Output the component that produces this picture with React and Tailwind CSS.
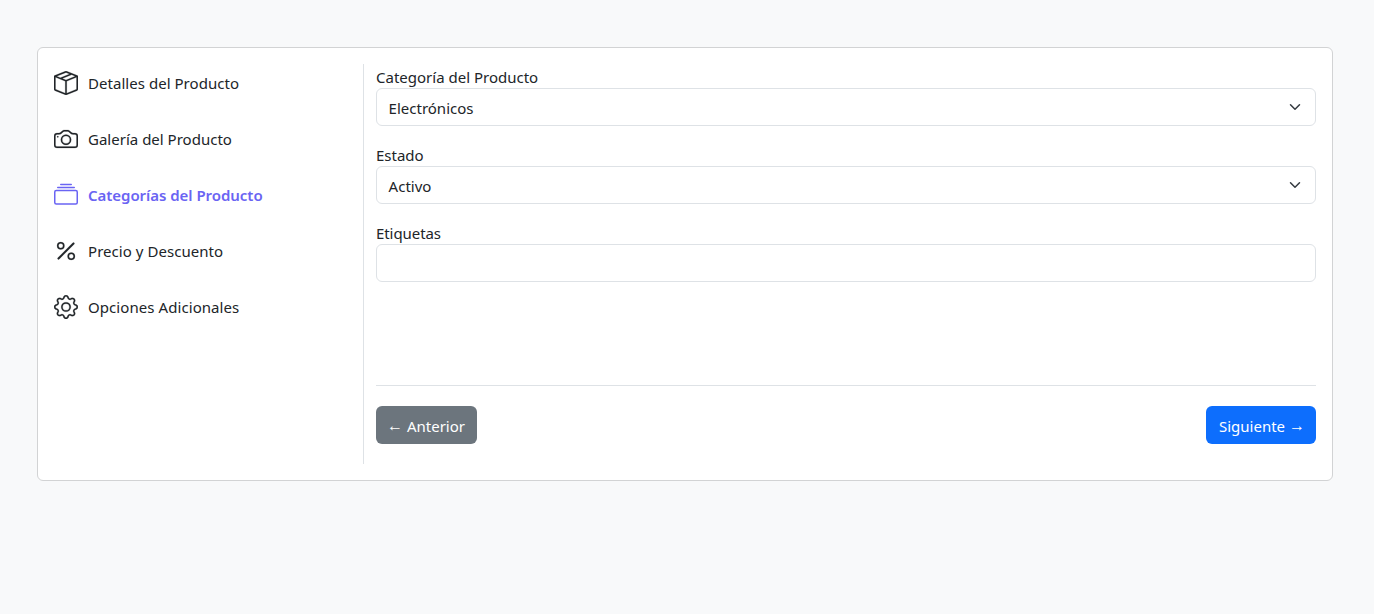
import { BsBoxSeam, BsCamera, BsCollection, BsPercent, BsGear } from "react-icons/bs";

const STEPS = [
  { label: "Detalles del Producto", Icon: BsBoxSeam, spacing: "tracking-[0.04px]" },
  { label: "Galería del Producto", Icon: BsCamera, spacing: "tracking-[0.01px]" },
  { label: "Categorías del Producto", Icon: BsCollection, active: true, spacing: "tracking-[-0.04px]" },
  { label: "Precio y Descuento", Icon: BsPercent, spacing: "tracking-[0.05px]" },
  { label: "Opciones Adicionales", Icon: BsGear, spacing: "tracking-[0.07px]" },
];

function Sidebar() {
  return (
    <nav className="flex w-[309px] shrink-0 flex-col gap-8 pt-[7px]">
      {STEPS.map(({ label, Icon, active, spacing }) => (
        <a
          key={label}
          className={
            active
              ? "flex h-6 items-center gap-2.5 font-semibold text-[#6a64f3]"
              : "flex h-6 items-center gap-2.5"
          }
        >
          <Icon className={active ? "size-6 shrink-0 stroke-0" : "size-6 shrink-0 stroke-[0.12]"} />
          <span className={spacing}>{label}</span>
        </a>
      ))}
    </nav>
  );
}

function Chevron() {
  return (
    <svg viewBox="0 0 16 16" className="mr-0.5 h-3 w-3 fill-none stroke-[#343a40] stroke-2">
      <path strokeLinecap="round" strokeLinejoin="round" d="m2 5 6 6 6-6" />
    </svg>
  );
}

function Select({ label, value }) {
  return (
    <div className="mb-4">
      <div className="h-6 pt-px">{label}</div>
      <div className="flex h-[38px] items-center justify-between rounded-md border border-[#dee2e6] bg-white px-3">
        <span className="-ml-[0.4px] pt-0.5">{value}</span>
        <Chevron />
      </div>
    </div>
  );
}

export default function App() {
  return (
    <div className="min-h-screen bg-[#f8f9fa] pt-[47px] pl-[37px] font-['Noto_Sans','Open_Sans',sans-serif] text-[15px] leading-6 text-[#212529]">
      <main className="flex h-[434px] w-[1296px] rounded-md border border-[#d2d3d4] bg-white p-4">
        <Sidebar />
        <section className="flex flex-1 flex-col border-l border-[#dee2e6] pl-3">
          <Select label="Categoría del Producto" value="Electrónicos" />
          <Select label="Estado" value="Activo" />
          <label className="block h-6 pt-px tracking-[-0.07px]" htmlFor="etiquetas">Etiquetas</label>
          <input id="etiquetas" className="h-[38px] w-full rounded-md border border-[#dee2e6] px-3" />
          <div className="mt-[103px] flex justify-between border-t border-[#dee2e6] pt-5">
            <button className="flex h-[38px] w-[101px] items-center justify-between rounded-md bg-[#6c757d] pt-0.5 pr-3 pl-[11px] text-white">
              <span className="pb-0.5 text-base leading-6">←</span>
              <span>Anterior</span>
            </button>
            <button className="flex h-[38px] w-[110px] items-center justify-between rounded-md bg-[#0d6efd] pt-0.5 pr-[11px] pl-[13px] text-white">
              <span>Siguiente</span>
              <span className="pb-0.5 text-base leading-6">→</span>
            </button>
          </div>
        </section>
      </main>
    </div>
  );
}
